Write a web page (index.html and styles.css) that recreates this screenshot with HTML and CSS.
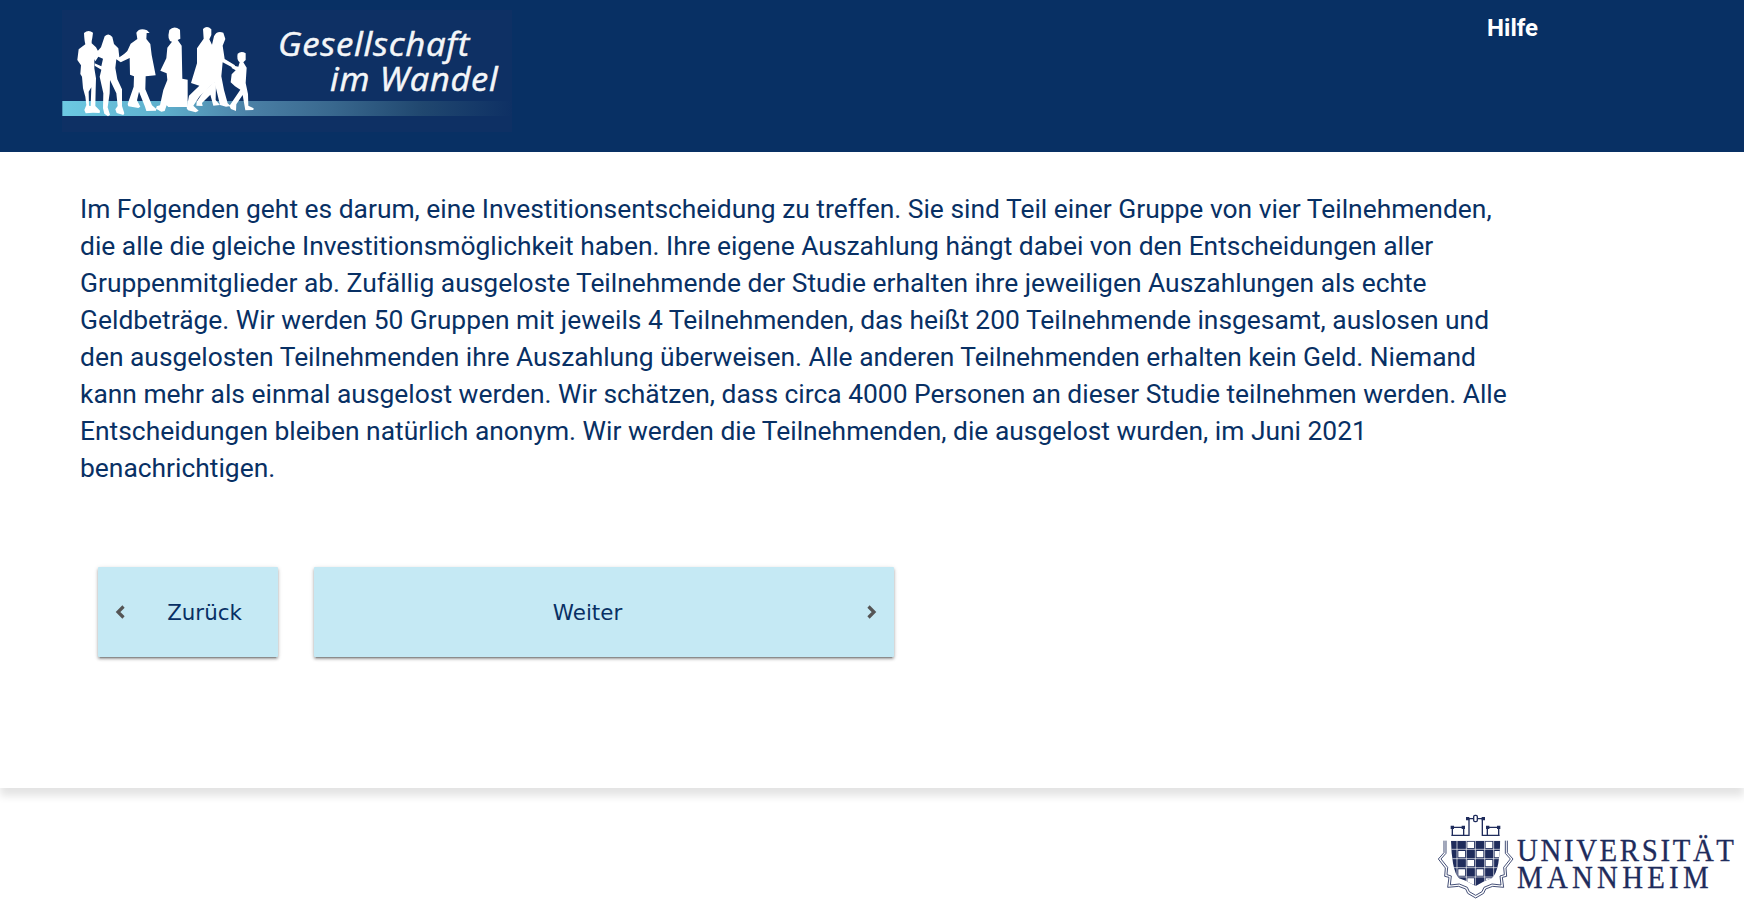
FILE: index.html
```html
<!DOCTYPE html>
<html lang="de">
<head>
<meta charset="utf-8">
<title>Gesellschaft im Wandel</title>
<link rel="stylesheet" href="styles.css">
</head>
<body>
<header class="header">
  <svg class="logo" viewBox="36 30 1350 366" role="img" aria-label="Gesellschaft im Wandel">
    <defs>
      <linearGradient id="bar" x1="0" x2="1" y1="0" y2="0">
        <stop offset="0" stop-color="#6cc9e2"/>
        <stop offset=".22" stop-color="#5fb0cd"/>
        <stop offset=".42" stop-color="#4a7fa5"/>
        <stop offset=".6" stop-color="#39688e"/>
        <stop offset=".8" stop-color="#20476f"/>
        <stop offset="1" stop-color="#0e3064"/>
      </linearGradient>
    </defs>
    <rect x="36" y="30" width="1350" height="366" fill="#0e3064"/>
    <rect x="37" y="303" width="1349" height="45" fill="url(#bar)"/>
    <g class="people">
      <path d="M102 99Q115 88 129 98L127 113Q124 125 125 130L138 142L146 157L133 170V205L138 235L137 270L136 318L150 332L149 339L129 338L107 340L103 330L109 315L106 290L99 265L96 230L91 222L93 196L82 180L86 148L106 133Q103 122 102 99ZM116 275L117 317L122 318L124 262Z"/>
      <path d="M164 109Q176 97 187 111L192 132L205 145L208 172L229 158L232 168L211 186L199 178L196 204L202 238L216 268L216 318L223 340L220 345L200 339L196 328L203 318L199 280L180 240L179 280L173 322L180 344L174 349L163 341L159 325L160 280L149 230L154 209L134 197V190L154 199L159 176L145 170L136 184L128 170L153 142Z"/>
      <path d="M259 98Q269 82 291 91L299 99H290L289 117L301 132L305 165L317 226L287 229L286 268L306 316L319 327L318 332L289 333L285 320L267 275L261 301L271 320L265 324L235 319L233 312L251 260L252 229L240 224L239 174L212 187L207 177L232 153L242 131L262 117Z"/>
      <path d="M358 90Q372 75 390 89L391 116L383 120L395 137L397 236L413 239L413 321H355L350 316L344 333L334 335L318 326L320 319L330 316L340 270L352 240L350 220L331 212L349 175L352 143L366 125Q350 123 358 90Z"/>
      <path d="M459 87Q471 75 484 88L484 105L478 118L486 134L492 109Q500 91 520 98L526 117L518 137L524 177L555 196L552 205L518 187L514 229L522 270L533 310L542 318L528 320L510 315L494 248L482 256L448 290L430 317L446 332L437 337L414 331L410 325L417 287L448 257L423 249L441 190V145L461 116Z"/>
      <path d="M476 260L490 247L498 249L497 300L510 315L490 317L481 284L456 309L458 318L439 317L440 305L462 273Z"/>
      <path d="M563 161Q574 152 587 160V180L580 187L590 203L587 249L594 282L595 317L611 325L610 330L586 331L578 285L559 313L558 333L543 327L538 318L571 269L555 259L542 247L545 223L557 211L545 204L546 196L565 200L569 187Q559 178 563 161Z"/>
    </g>
    <g class="logo-text">
      <text x="684" y="169" textLength="576" lengthAdjust="spacingAndGlyphs">Gesellschaft</text>
      <text x="840" y="272" textLength="505" lengthAdjust="spacingAndGlyphs">im Wandel</text>
    </g>
  </svg>
  <a class="help">Hilfe</a>
</header>
<main class="content">
  <p class="intro">Im Folgenden geht es darum, eine Investitionsentscheidung zu treffen. Sie sind Teil einer Gruppe von vier Teilnehmenden, die alle die gleiche Investitionsmöglichkeit haben. Ihre eigene Auszahlung hängt dabei von den Entscheidungen aller Gruppenmitglieder ab. Zufällig ausgeloste Teilnehmende der Studie erhalten ihre jeweiligen Auszahlungen als echte Geldbeträge. Wir werden 50 Gruppen mit jeweils 4 Teilnehmenden, das heißt 200 Teilnehmende insgesamt, auslosen und den ausgelosten Teilnehmenden ihre Auszahlung überweisen. Alle anderen Teilnehmenden erhalten kein Geld. Niemand kann mehr als einmal ausgelost werden. Wir schätzen, dass circa 4000 Personen an dieser Studie teilnehmen werden. Alle Entscheidungen bleiben natürlich anonym. Wir werden die Teilnehmenden, die ausgelost wurden, im Juni 2021 benachrichtigen.</p>
  <div class="actions">
    <button class="btn back"><svg class="arrow" viewBox="0 0 10 14"><path d="M8.5 1.5L3 7L8.5 12.5"/></svg><span class="label">Zurück</span></button>
    <button class="btn next"><span class="label">Weiter</span><svg class="arrow" viewBox="0 0 10 14"><path d="M1.5 1.5L7 7L1.5 12.5"/></svg></button>
  </div>
</main>
<footer class="footer">
  <svg class="uni" viewBox="0 0 324 104" role="img" aria-label="Universität Mannheim">
    <g transform="scale(.33333)">
      <g class="crest-line">
        <path d="M94 106H147V58M94 106H133M187 58V106H239M97 82V106M131 82V106M202 82V106M236 82V106M97 82H131M202 82H236M143 56H190"/>
        <rect class="fill-white" x="161" y="46" width="11" height="19" rx="4"/>
      </g>
      <path class="navy" d="M92 77h10v10h-10zM125 77h10v10h-10zM198 77h10v10h-10zM231 77h10v10h-10zM138 51h10v10h-10zM185 51h10v10h-10z"/>
      <clipPath id="shield"><path d="M93 122H241Q240 160 235 190Q229 223 215 235Q190 243 167 258Q144 243 117 235Q105 223 99 190Q94 160 93 122Z"/></clipPath>
      <g clip-path="url(#shield)">
        <rect class="navy" x="90" y="120" width="154" height="140"/>
        <path class="fill-white" d="M142 125h20v19h-20zM197 125h20v19h-20zM115 153h20v19h-20zM170 153h20v19h-20zM224 153h20v19h-20zM142 180h20v19h-20zM197 180h20v19h-20zM115 208h20v19h-20zM170 208h20v19h-20zM142 235h20v19h-20zM197 235h20v19h-20z"/>
        <path class="grid" d="M111 120V260M139 120V260M166 120V260M194 120V260M221 120V260M90 148H244M90 176H244M90 203H244M90 231H244"/>
      </g>
      <g class="crest-edge">
        <path d="M72 122V158L55 177L76 204L74 229L87 232L83 262L116 259L137 267L143 280L167 294L191 280L197 267L218 259L251 262L247 232L260 229L258 204L279 177L262 158V122"/>
        <path d="M78 122V160L63 177L83 202L81 224L94 228L91 255L118 252L142 262L148 275L167 286L186 275L192 262L216 252L243 255L240 228L253 224L251 202L271 177L256 160V122"/>
      </g>
    </g>
    <g class="uni-name" transform="scale(.93 1)">
      <text x="104.3" y="61.5" textLength="233.3" lengthAdjust="spacing">UNIVERSITÄT</text>
      <text x="104.3" y="88" textLength="206" lengthAdjust="spacing">MANNHEIM</text>
    </g>
  </svg>
</footer>
</body>
</html>
```

FILE: styles.css
```css
* { box-sizing: border-box; }
body {
  margin: 0;
  height: 904px;
  overflow: hidden;
  display: flex;
  flex-direction: column;
  background: #fff;
  color: #083064;
  font-family: Roboto, sans-serif;
}
.header {
  height: 152px;
  flex: none;
  display: flex;
  justify-content: space-between;
  align-items: flex-start;
  padding: 10px 206px 0 62px;
  background: #083064;
}
.logo { width: 450px; height: 122px; }
.people { fill: #fff; }
.logo-text {
  fill: #f4f6f8;
  stroke: #f4f6f8;
  stroke-width: 1.5;
  font: italic 96px "Open Sans", sans-serif;
  letter-spacing: 2px;
}
.help {
  margin-top: 3px;
  color: #fff;
  font-size: 24px;
  font-weight: 700;
  line-height: 30px;
}
.content {
  flex: none;
  height: 636px;
  padding: 39px 80px 0;
  box-shadow: 0 8px 8px rgba(0, 0, 0, .11);
}
.intro {
  width: 1430px;
  margin: 0;
  font-size: 26.4px;
  line-height: 37px;
}
.actions {
  display: flex;
  gap: 36px;
  padding: 80px 18px 0;
}
.btn {
  height: 90px;
  display: flex;
  align-items: center;
  padding: 0 17px;
  border: 0;
  border-radius: 1px;
  background: #c5e9f4;
  color: #083064;
  font: 21.4px "DejaVu Sans", sans-serif;
  box-shadow: 0 3px 1px -2px rgba(0, 0, 0, .2), 0 2px 3px rgba(0, 0, 0, .3), 0 1px 5px rgba(0, 0, 0, .12);
}
.back { width: 180px; }
.next { width: 580px; }
.label { flex: 1; text-align: center; }
.back .label { padding-left: 23px; }
.next .label { padding-right: 23px; }
.arrow {
  width: 10px;
  height: 14px;
  fill: none;
  stroke: #555;
  stroke-width: 3.2;
}
.footer {
  flex: 1;
  display: flex;
  justify-content: flex-end;
  padding-top: 12px;
}
.uni { width: 324px; height: 104px; fill: #1f2c5c; }
.uni-name {
  font: 31px "Liberation Serif", serif;
  stroke: #1f2c5c;
  stroke-width: .3;
}
.navy { fill: #1f2c5c; }
.fill-white { fill: #fff; }
.crest-line { fill: none; stroke: #1f2c5c; stroke-width: 4; }
.crest-edge { fill: none; stroke: #1f2c5c; stroke-width: 2.5; }
.grid { stroke: #fff; stroke-width: 2; }
```
